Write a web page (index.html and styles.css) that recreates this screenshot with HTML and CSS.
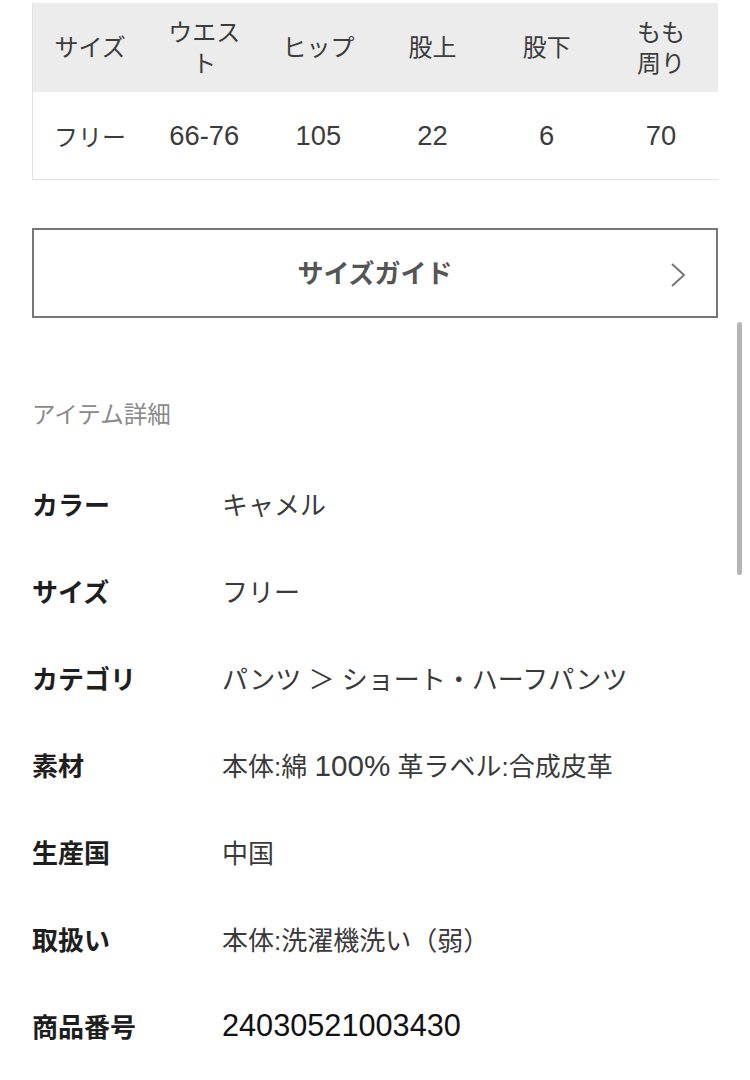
FILE: index.html
```html
<!DOCTYPE html>
<html lang="ja">
<head>
  <meta charset="UTF-8" />
  <meta name="viewport" content="width=device-width, initial-scale=1.0"/>
  <title>アイテム詳細</title>
  <link rel="stylesheet" href="styles.css">
</head>
<body>

  <div class="page">

    <div class="size-table">
      <table>
        <thead>
          <tr>
            <th>サイズ</th>
            <th>ウエス<br>ト</th>
            <th>ヒップ</th>
            <th>股上</th>
            <th>股下</th>
            <th>もも<br>周り</th>
          </tr>
        </thead>
        <tbody>
          <tr>
            <td>フリー</td>
            <td><span class="num">66-76</span></td>
            <td><span class="num">105</span></td>
            <td><span class="num">22</span></td>
            <td><span class="num">6</span></td>
            <td><span class="num">70</span></td>
          </tr>
        </tbody>
      </table>
    </div>

    <a class="guide-btn" href="#">
      <span>サイズガイド</span>
      <svg class="chevron" width="16" height="26" viewBox="0 0 16 26">
        <polyline points="2,2 14,13 2,24" fill="none" stroke="#777" stroke-width="2"/>
      </svg>
    </a>

    <h3 class="section-title">アイテム詳細</h3>

    <dl class="details">
      <dt>カラー</dt>
      <dd>キャメル</dd>

      <dt>サイズ</dt>
      <dd>フリー</dd>

      <dt>カテゴリ</dt>
      <dd>パンツ ＞ ショート・ハーフパンツ</dd>

      <dt>素材</dt>
      <dd>本体:綿 <span class="num">100%</span> 革ラベル:合成皮革</dd>

      <dt>生産国</dt>
      <dd>中国</dd>

      <dt>取扱い</dt>
      <dd>本体:洗濯機洗い（弱）</dd>

      <dt>商品番号</dt>
      <dd class="code"><span class="num">24030521003430</span></dd>
    </dl>

  </div>

  <div class="scroll-thumb"></div>

</body>
</html>
```

FILE: styles.css
```css
body {
  margin: 0;
  background: #fff;
  color: #333;
  font-family: "Liberation Sans", "Noto Sans CJK JP", sans-serif;
}

.page {
  padding: 3px 32px 40px 32px;
}

.num {
  font-family: "Liberation Sans", Arial, sans-serif;
  font-size: 1.14em;
}

/* size table */

.size-table {
  border-left: 1px solid #e2e2e2;
  border-bottom: 1px solid #e2e2e2;
  overflow: hidden;
}

.size-table table {
  width: 100%;
  border-collapse: collapse;
  table-layout: fixed;
  font-size: 24px;
  color: #3c3c3c;
}

.size-table th {
  background: #ececec;
  font-weight: normal;
  height: 89px;
  padding: 0 12px;
  line-height: 31px;
  text-align: center;
}

.size-table td {
  height: 87px;
  padding: 0 8px;
  text-align: center;
  white-space: nowrap;
}

/* size guide button */

.guide-btn {
  margin-top: 48px;
  height: 82px;
  padding-bottom: 4px;
  border: 2px solid #777;
  display: flex;
  align-items: center;
  justify-content: center;
  position: relative;
  text-decoration: none;
  color: #555;
  font-size: 26px;
  font-weight: bold;
}

.guide-btn .chevron {
  position: absolute;
  right: 30px;
  top: 32px;
}

/* item details */

.section-title {
  margin: 81px 0 0 0;
  font-size: 23.5px;
  font-weight: normal;
  color: #8a8a8a;
  line-height: 32px;
}

.details {
  margin: 29px 0 0 0;
  display: grid;
  grid-template-columns: 190px 1fr;
  grid-auto-rows: 87px;
  align-items: center;
  font-size: 26px;
}

.details dt {
  font-weight: bold;
  color: #1e1e1e;
}

.details dd {
  margin: 0;
  color: #3a3a3a;
  white-space: nowrap;
}

.details dd.code {
  color: #111;
}

.details dd.code .num {
  font-size: 1.18em;
}

.scroll-thumb {
  position: absolute;
  left: 737px;
  top: 322px;
  width: 5px;
  height: 253px;
  border-radius: 3px;
  background: #b5b5b5;
}
```
